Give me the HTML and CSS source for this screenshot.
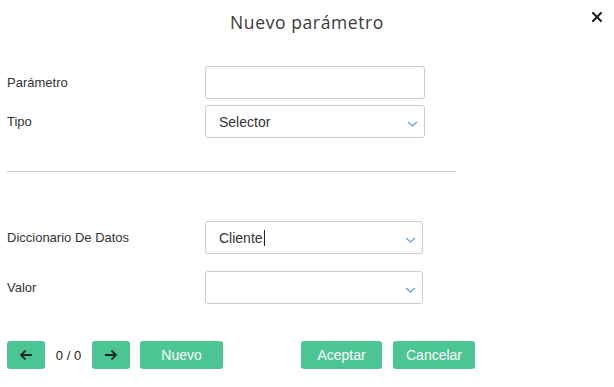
FILE: index.html
```html
<!DOCTYPE html>
<html lang="es">
<head>
<meta charset="utf-8">
<link rel="stylesheet" href="styles.css">
</head>
<body>
<div class="modal">
  <div class="header">
    <h1 class="title">Nuevo parámetro</h1>
    <span class="close">
      <svg width="10" height="10" viewBox="0 0 10 10"><path d="M1 1L9 9M9 1L1 9" stroke="#222" stroke-width="2.2" stroke-linecap="square"/></svg>
    </span>
  </div>
  <div class="section top">
    <div class="row r1">
      <label class="label">Parámetro</label>
      <div class="field wide"></div>
    </div>
    <div class="row r2">
      <label class="label">Tipo</label>
      <div class="field wide select"><span class="value">Selector</span>
        <svg class="chev" width="11" height="6" viewBox="0 0 11 6"><path d="M1 1L5.5 5L10 1" fill="none" stroke="#6fa8dc" stroke-width="1.5"/></svg>
      </div>
    </div>
  </div>
  <hr class="divider">
  <div class="section bottom">
    <div class="row r3">
      <label class="label">Diccionario De Datos</label>
      <div class="field narrow select"><span class="value">Cliente<span class="caret"></span></span>
        <svg class="chev" width="11" height="6" viewBox="0 0 11 6"><path d="M1 1L5.5 5L10 1" fill="none" stroke="#6fa8dc" stroke-width="1.5"/></svg>
      </div>
    </div>
    <div class="row r4">
      <label class="label">Valor</label>
      <div class="field narrow select"><span class="value"></span>
        <svg class="chev" width="11" height="6" viewBox="0 0 11 6"><path d="M1 1L5.5 5L10 1" fill="none" stroke="#6fa8dc" stroke-width="1.5"/></svg>
      </div>
    </div>
  </div>
  <div class="footer">
    <button class="btn arrow">
      <svg width="14" height="12" viewBox="0 0 14 12"><path d="M13 6H2M6.5 1.5L2 6L6.5 10.5" fill="none" stroke="#1e2a24" stroke-width="1.8"/></svg>
    </button>
    <span class="count">0 / 0</span>
    <button class="btn arrow">
      <svg width="14" height="12" viewBox="0 0 14 12"><path d="M1 6H12M7.5 1.5L12 6L7.5 10.5" fill="none" stroke="#1e2a24" stroke-width="1.8"/></svg>
    </button>
    <button class="btn text nuevo">Nuevo</button>
    <button class="btn text aceptar">Aceptar</button>
    <button class="btn text cancelar">Cancelar</button>
  </div>
</div>
</body>
</html>
```

FILE: styles.css
```css
* { box-sizing: border-box; }
html, body { margin: 0; padding: 0; background: #fff; }
body { font-family: "Liberation Sans", Arial, sans-serif; color: #333; }
.modal { width: 614px; height: 387px; position: relative; }
.header { height: 44px; display: flex; justify-content: center; align-items: flex-start; padding-top: 11px; }
.title { margin: 0; font-family: "Open Sans", "Lato", sans-serif; font-weight: 400; font-size: 17.5px; letter-spacing: 0.6px; color: #3a3a3a; line-height: 22px; }
.close { position: absolute; left: 592px; top: 12px; width: 10px; height: 10px; display: block; }
.close svg { display: block; }
.section { padding-left: 7px; }
.top { padding-top: 22px; }
.row { display: flex; align-items: center; }
.label { width: 198px; font-size: 13px; color: #333; margin-top: -1px; }
.field { height: 33px; border: 1px solid #ccc; border-radius: 3px; background: #fff; position: relative; display: flex; align-items: center; }
.wide { width: 220px; }
.narrow { width: 218px; }
.r2 { margin-top: 6px; }
.value { font-size: 14px; color: #333; padding-left: 13px; display: flex; align-items: center; }
.caret { display: inline-block; width: 1px; height: 16px; background: #222; margin-left: 1px; }
.chev { position: absolute; right: 6px; top: 15px; }
.divider { margin: 33px 0 0 7px; width: 449px; border: 0; border-top: 1px solid #c8c8c8; height: 0; }
.bottom { padding-top: 49px; }
.r4 { margin-top: 17px; }
.footer { display: flex; align-items: center; padding-left: 7px; margin-top: 37px; }
.btn { height: 28px; border: 0; border-radius: 3px; background: #4cc594; color: #fff; font-family: "Liberation Sans", Arial, sans-serif; font-size: 14px; display: flex; align-items: center; justify-content: center; padding: 0; }
.arrow { width: 38px; }
.count { font-size: 13px; color: #222; width: 47px; text-align: center; }
.nuevo { width: 83px; margin-left: 10px; }
.aceptar { width: 81px; margin-left: 78px; }
.cancelar { width: 82px; margin-left: 11px; }
```
